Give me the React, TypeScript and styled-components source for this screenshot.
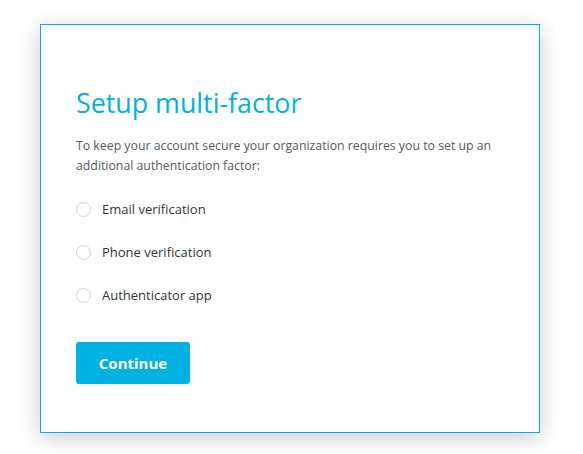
import React, { useState } from "react";
import styled, { createGlobalStyle } from "styled-components";

const GlobalStyle = createGlobalStyle`
  html, body {
    margin: 0;
    padding: 0;
    background: #ffffff;
  }
  body {
    font-family: "Open Sans", "Noto Sans", Arial, sans-serif;
  }
`;

const Page = styled.div`
  padding: 24px 43px 21px 40px;
`;

const Card = styled.div`
  box-sizing: border-box;
  width: 500px;
  height: 409px;
  border: 1px solid #00b2e2;
  background: #ffffff;
  box-shadow: 0 5px 20px rgba(0, 0, 0, 0.2);
  padding: 63px 35px 0 35px;
`;

const Title = styled.h1`
  margin: 0;
  font-size: 26.8px;
  line-height: 30px;
  font-weight: 400;
  color: #00b2e2;
  letter-spacing: 0;
`;

const Intro = styled.p`
  margin: 18px 0 0 0;
  font-size: 12.3px;
  line-height: 20px;
  color: #555a60;
`;

const Options = styled.div`
  display: flex;
  flex-direction: column;
  gap: 21px;
  margin-top: 22px;
`;

const Option = styled.label`
  display: flex;
  align-items: center;
  gap: 11px;
  height: 22px;
  font-size: 13px;
  color: #333638;
  cursor: pointer;
`;

const Radio = styled.span<{ $checked: boolean }>`
  box-sizing: border-box;
  width: 15px;
  height: 15px;
  border-radius: 50%;
  border: 1px solid #cfd2d4;
  background: #fff;
  display: flex;
  align-items: center;
  justify-content: center;
  &::after {
    content: "";
    width: 7px;
    height: 7px;
    border-radius: 50%;
    background: ${(p) => (p.$checked ? "#00b2e2" : "transparent")};
  }
`;

const Button = styled.button`
  margin-top: 36px;
  width: 114px;
  height: 42px;
  border: none;
  border-radius: 3px;
  background: #00b2e2;
  color: #ffffff;
  font-family: inherit;
  font-size: 15px;
  font-weight: 700;
  cursor: pointer;
`;

const methods = ["Email verification", "Phone verification", "Authenticator app"];

export default function App() {
  const [selected, setSelected] = useState<number | null>(null);
  return (
    <>
      <GlobalStyle />
      <Page>
        <Card>
          <Title>Setup multi-factor</Title>
          <Intro>
            To keep your account secure your organization requires you to set up an
            <br />
            additional authentication factor:
          </Intro>
          <Options>
            {methods.map((m, i) => (
              <Option key={m} onClick={() => setSelected(i)}>
                <Radio $checked={selected === i} />
                {m}
              </Option>
            ))}
          </Options>
          <Button>Continue</Button>
        </Card>
      </Page>
    </>
  );
}
